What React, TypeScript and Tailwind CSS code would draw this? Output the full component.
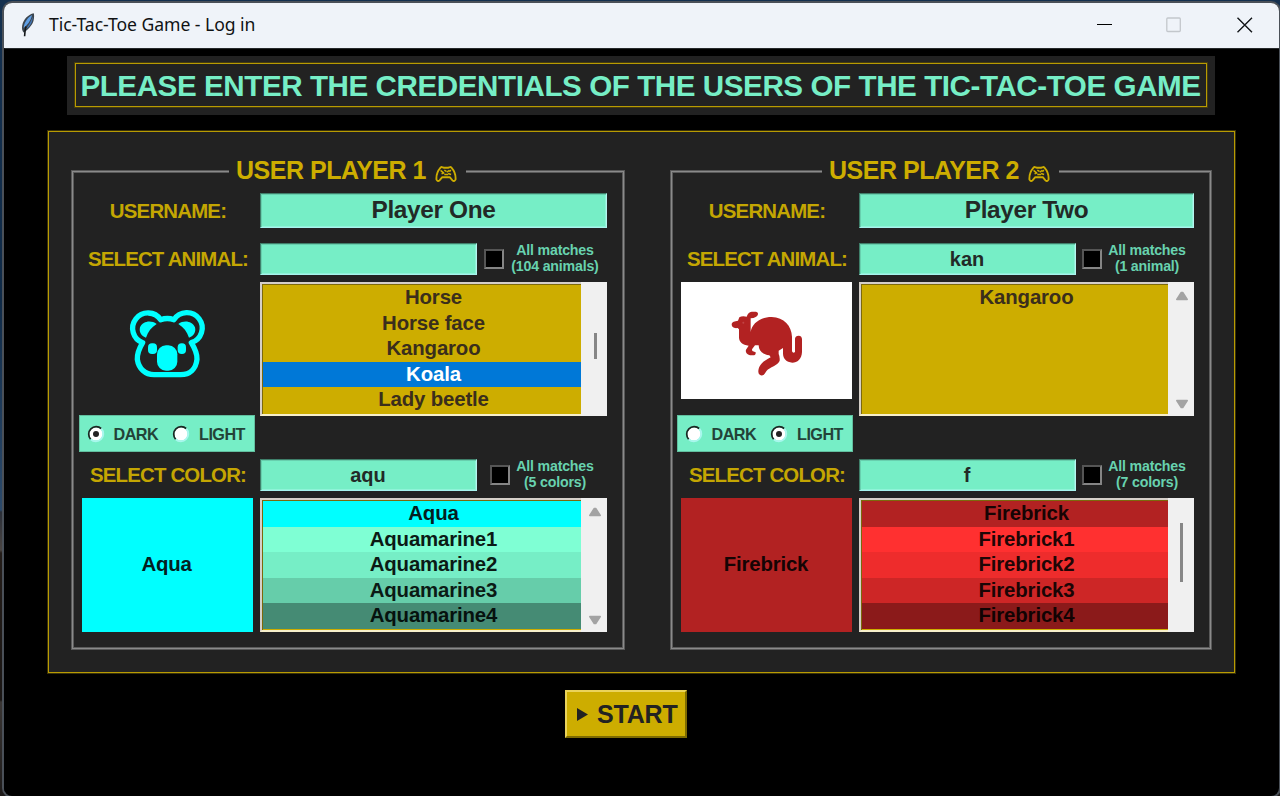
import React from "react";

type Row = { text: string; className: string };

type Player = {
  title: string;
  name: string;
  animalQuery: string;
  animalMatches: string;
  animals: Row[];
  animalScroll: React.ReactNode;
  theme: "dark" | "light";
  picture: React.ReactNode;
  colorQuery: string;
  colorMatches: string;
  colors: Row[];
  colorScroll: React.ReactNode;
  swatch: Row;
  groupClass: string;
  themeClass: string;
  wideClass: string;
  animalCheckClass: string;
  colorCheckClass: string;
  animalNoteClass: string;
  colorNoteClass: string;
};

const GOLD_ROW = "text-[#3a2e1c]";

function Feather() {
  return (
    <svg className="h-6 w-4" viewBox="0 0 16 24">
      <path d="M13.800 .3C8.500 1.500 3.500 6 2.200 12.500c-.6 3 0 5.200 1.300 7C8 17 12.500 12 13.600 7.500c.6-2.500.7-5 .2-7.200Z" fill="#3c454e" />
      <path d="M12.200 2C7.500 4.500 4 9.500 3.600 15 7.500 12 10.500 8 12.200 2Z" fill="#5f9fe6" />
      <path d="M12.800 3.500C10.800 9 8.500 13 4.800 17.200 9 14.500 12.800 10 12.800 3.500Z" fill="#4377b8" />
      <path d="M6 13.500C5 17 4.700 20 4.600 23.200" fill="none" stroke="#15181b" strokeWidth="1.600" />
    </svg>
  );
}

function Gamepad() {
  return (
    <svg className="mt-[11px] h-4 w-[22px]" viewBox="0 0 64 47" fill="none" stroke="#cdad00" strokeWidth="5.500" strokeLinejoin="round">
      <path d="M16 5C18 2 22 3 25 5H39C42 3 46 2 48 5C55 13 61 28 60 40Q56 47 51 42L43 33H21L13 42Q8 47 4 40C3 28 9 13 16 5Z" />
      <path d="M16 13l9 7M19 23l8-3M27 12l6 4M27 25h11M34 18l8-5M38 22l9 3M46 12l-4 5" strokeWidth="4.500" />
    </svg>
  );
}

function Koala() {
  return (
    <svg className="h-[117px] w-[171px]" viewBox="66 396 513 351">
      <path
        d="M302 509A46 46 0 1 0 248 578C236 598 231 612 232 628C236 656 256 674 282 674H362C390 674 408 656 411 628C412 610 405 596 394 578A46 46 0 1 0 342 509Q322 502 302 509Z"
        fill="none"
        stroke="#00ffff"
        strokeWidth="16"
        strokeLinejoin="round"
      />
      <g fill="#00ffff">
        <path d="M290 522C272 509 248 514 240 532C236 548 246 560 258 563C264 545 274 532 290 522Z" />
        <path d="M355 522C373 509 397 514 405 532C409 548 399 560 387 563C381 545 371 532 355 522Z" />
        <rect x="264" y="580" width="27" height="32" rx="12" />
        <rect x="353" y="580" width="25" height="32" rx="12" />
        <rect x="291" y="586" width="61" height="76" rx="27" />
      </g>
    </svg>
  );
}

function Kangaroo() {
  return (
    <svg className="h-[117px] w-[171px]" viewBox="61 396 513 351">
      <path
        d="M258 500Q262 486 273 485H286Q293 486 292 493Q289 504 270 505V546C274 520 300 501 333 501C370 502 393 528 394 560V604Q397 611 403 606V566Q404 557 414 557Q424 558 424 568V606C423 628 410 638 395 638C377 637 367 626 367 610V594L354 602V612Q358 620 357 632C353 645 326 652 318 662L312 671Q308 677 300 676Q293 674 293 666C293 646 304 636 330 622L326 616C306 614 294 602 294 586H283L274 598L275 603L285 607Q286 616 277 616H268C257 612 254 606 256 599L264 587C246 586 235 576 235 562V538L231 534C218 536 213 530 213 523C214 515 222 514 232 512L236 502Q244 497 258 500Z"
        fill="#b22222"
      />
      <circle cx="248" cy="518" r="3" fill="#c04445" />
    </svg>
  );
}

function Arrow({ down }: { down?: boolean }) {
  return (
    <svg className={down ? "h-[10px] w-[14px] rotate-180" : "h-[10px] w-[14px]"} viewBox="0 0 14 10">
      <path d="M6.300 1.500h1.400L12.200 8.400H1.800Z" fill="#a3a3a3" stroke="#a3a3a3" strokeWidth="1.600" strokeLinejoin="round" />
    </svg>
  );
}

function Arrows() {
  return (
    <div className="flex h-full flex-col items-center justify-between pt-[9px] pb-[7px] pl-[2px]">
      <Arrow />
      <Arrow down />
    </div>
  );
}

function Entry({ className, children }: { className: string; children?: React.ReactNode }) {
  return (
    <div
      className={
        "flex shrink-0 items-center justify-center border border-t-[#3f7f6a] border-l-[#3f7f6a] border-r-[#b4f5f0] border-b-[#a6f3ee] bg-[#76eec6] font-bold text-[#222a27] shadow-[inset_1px_1px_0_#68cfae,inset_-1px_-1px_0_#8ff3d8] " +
        className
      }
    >
      {children}
    </div>
  );
}

function Check({ className }: { className: string }) {
  return (
    <div
      className={
        "size-5 shrink-0 border-2 border-t-[#555555] border-l-[#555555] border-r-[#858585] border-b-[#858585] bg-black " + className
      }
    />
  );
}

function Note({ className, count }: { className: string; count: string }) {
  return (
    <div className={"shrink-0 pb-[2px] text-center text-[14.2px] leading-4 font-bold tracking-[-0.2px] whitespace-nowrap text-[#68d2af] " + className}>
      All matches
      <br />
      {count}
    </div>
  );
}

function Radio({ on, label }: { on: boolean; label: string }) {
  return (
    <div className="flex items-center gap-[9px]">
      <svg className="size-[18px]" viewBox="0 0 18 18" fill="none">
        <circle cx="9" cy="9" r="6.600" fill="#ffffff" />
        <path d="M3.700 14.300A7.500 7.500 0 0 1 14.300 3.700" stroke="#1c2522" strokeWidth="1.700" />
        <path d="M14.300 3.700A7.500 7.500 0 0 1 3.700 14.300" stroke="#a9f7ee" strokeWidth="1.800" />
        {on && <circle cx="9" cy="9" r="3" fill="#222222" />}
      </svg>
      <span className="text-[16.2px] leading-5 font-bold tracking-[-0.55px] text-[#234238]">{label}</span>
    </div>
  );
}

function ListBox({ rows, scroll, className }: { rows: Row[]; scroll: React.ReactNode; className: string }) {
  return (
    <div className={"flex h-[134px] shrink-0 bg-[#cdad00] " + className}>
      <div className="min-w-0 flex-1 border-t-2 border-b-2 border-l-2 border-t-[#d5cfc9] border-b-[#f7efca] border-l-[#d5cfc9]">
        <div className="h-[130px] border-t border-l border-t-[#7c690c] border-l-[#7c690c]">
          {rows.map((row) => (
            <div key={row.text} className={"h-[25.5px] pl-[23px] text-center text-[20.4px] leading-[25px] font-bold tracking-[-0.15px] " + row.className}>
              {row.text}
            </div>
          ))}
        </div>
      </div>
      <div className="w-[26px] bg-[#f0f0f0]">{scroll}</div>
    </div>
  );
}

function Label({ children }: { children: React.ReactNode }) {
  return (
    <div className="mr-[6px] w-[175px] shrink-0 pl-[3px] text-center text-[20.4px] leading-8 font-bold tracking-[-0.8px] whitespace-nowrap text-[#c4a602]">
      {children}
    </div>
  );
}

function PlayerGroup({ p }: { p: Player }) {
  return (
    <section
      className={
        "h-[480px] pl-[8px] shadow-[inset_0_0_0_1px_#585858,inset_0_0_0_2px_#8a8a8a,inset_0_0_0_3px_#5a5a5a] " + p.groupClass
      }
    >
      <div className="-mt-[15px] flex h-[31px] justify-center pr-[10px]">
        <div className="flex w-[237px] justify-center gap-[9px] bg-[#222222] pr-[1px] text-[#cdad00]">
          <h2 className="text-[25px] leading-[31px] font-bold tracking-[-0.5px] whitespace-nowrap">{p.title}</h2>
          <Gamepad />
        </div>
      </div>

      <div className="mt-[7px] flex h-[35px] items-center">
        <Label>USERNAME:</Label>
        <Entry className={"h-[35px] text-[24.4px] tracking-[-0.35px] " + p.wideClass}>{p.name}</Entry>
      </div>

      <div className="mt-[15px] flex h-8 items-center">
        <Label>SELECT ANIMAL:</Label>
        <Entry className="h-8 w-[217px] pr-[1px] text-[20px]">{p.animalQuery}</Entry>
        <Check className={p.animalCheckClass} />
        <Note className={p.animalNoteClass} count={p.animalMatches} />
      </div>

      <div className="mt-[7px] flex h-[134px]">
        <div className="mr-[6px] w-[175px] shrink-0 pl-[3px]">{p.picture}</div>
        <ListBox rows={p.animals} scroll={p.animalScroll} className={p.wideClass} />
      </div>

      <div
        className={
          "-mt-[1px] flex h-[37px] w-[176px] items-center gap-[14px] bg-[#76eec6] pl-[7.5px] shadow-[inset_0_0_0_1px_#62bf9f] " + p.themeClass
        }
      >
        <Radio on={p.theme === "dark"} label="DARK" />
        <Radio on={p.theme === "light"} label="LIGHT" />
      </div>

      <div className="mt-[7px] flex h-8 items-center">
        <Label>SELECT COLOR:</Label>
        <Entry className="h-8 w-[217px] pr-[1px] text-[20px]">{p.colorQuery}</Entry>
        <Check className={p.colorCheckClass} />
        <Note className={p.colorNoteClass} count={p.colorMatches} />
      </div>

      <div className="mt-[7px] flex h-[134px]">
        <div className="mr-[6px] w-[175px] shrink-0 pl-[3px]">
          <div className={"flex h-[134px] w-[171px] items-center justify-center pb-[1px] text-[20.4px] font-bold tracking-[-0.2px] " + p.swatch.className}>
            {p.swatch.text}
          </div>
        </div>
        <ListBox rows={p.colors} scroll={p.colorScroll} className={p.wideClass} />
      </div>
    </section>
  );
}

const players: Player[] = [
  {
    title: "USER PLAYER 1",
    name: "Player One",
    animalQuery: "",
    animalMatches: "(104 animals)",
    animals: [
      { text: "Horse", className: GOLD_ROW },
      { text: "Horse face", className: GOLD_ROW },
      { text: "Kangaroo", className: GOLD_ROW },
      { text: "Koala", className: "bg-[#0078d7] text-white" },
      { text: "Lady beetle", className: GOLD_ROW },
    ],
    animalScroll: <div className="mt-[51px] ml-[13px] h-[26px] w-[3px] bg-[#868686]" />,
    theme: "dark",
    picture: <Koala />,
    colorQuery: "aqu",
    colorMatches: "(5 colors)",
    colors: [
      { text: "Aqua", className: "bg-[#00ffff] text-[#04201f]" },
      { text: "Aquamarine1", className: "bg-[#7fffd4] text-[#0b1a15]" },
      { text: "Aquamarine2", className: "bg-[#76eec6] text-[#0b1a15]" },
      { text: "Aquamarine3", className: "bg-[#66cdaa] text-[#0b1a15]" },
      { text: "Aquamarine4", className: "bg-[#458b74] text-[#06110e]" },
    ],
    colorScroll: <Arrows />,
    swatch: { text: "Aqua", className: "bg-[#00ffff] pr-[2px] text-[#04201f]" },
    groupClass: "w-[554px]",
    themeClass: "ml-0",
    wideClass: "w-[347px]",
    animalCheckClass: "ml-[7px]",
    colorCheckClass: "ml-[13px]",
    animalNoteClass: "w-[102px]",
    colorNoteClass: "w-[90px]",
  },
  {
    title: "USER PLAYER 2",
    name: "Player Two",
    animalQuery: "kan",
    animalMatches: "(1 animal)",
    animals: [{ text: "Kangaroo", className: GOLD_ROW }],
    animalScroll: <Arrows />,
    theme: "light",
    picture: (
      <div className="w-[171px] bg-white">
        <Kangaroo />
      </div>
    ),
    colorQuery: "f",
    colorMatches: "(7 colors)",
    colors: [
      { text: "Firebrick", className: "bg-[#b22222] text-[#160404]" },
      { text: "Firebrick1", className: "bg-[#ff3030] text-[#1f0606]" },
      { text: "Firebrick2", className: "bg-[#ee2c2c] text-[#1f0606]" },
      { text: "Firebrick3", className: "bg-[#cd2626] text-[#1a0505]" },
      { text: "Firebrick4", className: "bg-[#8b1a1a] text-[#110303]" },
    ],
    colorScroll: <div className="mt-[25px] ml-[12px] h-[59px] w-[3px] bg-[#868686]" />,
    swatch: { text: "Firebrick", className: "bg-[#b22222] pr-[1px] text-[#160404]" },
    groupClass: "w-[542px]",
    themeClass: "-ml-[1px]",
    wideClass: "w-[335px]",
    animalCheckClass: "ml-[6px]",
    colorCheckClass: "ml-[6px]",
    animalNoteClass: "w-[90px]",
    colorNoteClass: "w-[90px]",
  },
];

export default function App() {
  return (
    <div className="h-[796px] w-[1280px] overflow-hidden bg-[linear-gradient(to_bottom,#14304f_0px,#0f2a47_300px,#2c4a6b_510px,#2b2f38_512px,#4a4542_550px,#241d19_553px,#1a1614_700px,#3a3634_702px,#1d1a19_796px)] pt-[3px] pl-1 font-['Liberation_Sans',Arial,sans-serif]">
      <div className="flex h-[793px] w-[1275px] flex-col overflow-hidden rounded-[8px] bg-black shadow-[0_0_0_2px_#4a5058]">
        <header className="flex h-[45px] shrink-0 items-center bg-[#eff3f9] pb-[2px] pl-4">
          <Feather />
          <div className="ml-[13px] font-['Noto_Sans',sans-serif] text-[17.6px] tracking-[-0.05px] text-[#101214]">Tic-Tac-Toe Game - Log in</div>
          <svg className="mr-[26px] ml-auto h-4 w-[156px]" viewBox="0 0 156 16" fill="none">
            <path d="M0 7.500H15" stroke="#000000" strokeWidth="1" />
            <rect x="69.800" y="1" width="13.500" height="13.500" rx="1" stroke="#c3c7cc" strokeWidth="1.300" />
            <path d="M140.500 .7l14.500 14.600M155 .7l-14.500 14.600" stroke="#15181b" strokeWidth="1.400" />
          </svg>
        </header>

        <main className="flex flex-1 flex-col border-t border-[#26292c] border-l border-l-black">
          <div className="mt-[7px] ml-[62px] flex h-[59px] w-[1148px] items-center justify-center bg-[#222222] pb-[1px]">
            <h1 className="mr-[1px] flex h-[44px] w-[1132px] items-center justify-center border border-[#b89b02] pt-[3px] text-[29.6px] font-bold tracking-[-0.43px] whitespace-nowrap text-[#76eec6] shadow-[0_0_0_1px_#453c0f]">
              PLEASE ENTER THE CREDENTIALS OF THE USERS OF THE TIC-TAC-TOE GAME
            </h1>
          </div>

          <div className="mt-[16px] ml-[43px] flex h-[542px] w-[1187px] gap-[45px] border border-[#b89b02] bg-[#222222] pt-[38px] pl-[22px] shadow-[0_0_0_1px_#3a3208]">
            {players.map((p) => (
              <PlayerGroup key={p.title} p={p} />
            ))}
          </div>

          <button
            type="button"
            className="mt-[17px] ml-[560px] flex h-[48px] w-[122px] items-center gap-[9px] border-2 border-t-[#ead35a] border-r-[#7d6a00] border-b-[#7d6a00] border-l-[#ead35a] bg-[#cdad00] pl-[10px] text-[25px] font-bold tracking-[-0.2px] text-[#222222]"
          >
            <svg className="h-[13px] w-[11px] shrink-0" viewBox="0 0 11 13">
              <path d="M0 0L11 6.500L0 13Z" fill="#222222" />
            </svg>
            <span className="pt-[2px]">START</span>
          </button>
        </main>
      </div>
    </div>
  );
}
